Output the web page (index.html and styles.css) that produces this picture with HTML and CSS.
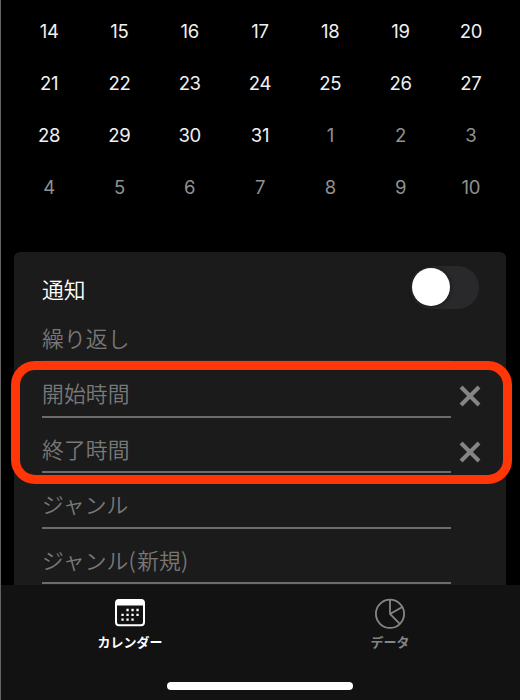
FILE: index.html
```html
<!DOCTYPE html>
<html lang="ja">
<head>
<meta charset="utf-8">
<title>カレンダー</title>
<link rel="stylesheet" href="styles.css">
</head>
<body>
<div class="screen">
  <main class="content">
    <div class="calendar">
      <span>14</span><span>15</span><span>16</span><span>17</span><span>18</span><span>19</span><span>20</span>
      <span>21</span><span>22</span><span>23</span><span>24</span><span>25</span><span>26</span><span>27</span>
      <span>28</span><span>29</span><span>30</span><span>31</span><span class="next">1</span><span class="next">2</span><span class="next">3</span>
      <span class="next">4</span><span class="next">5</span><span class="next">6</span><span class="next">7</span><span class="next">8</span><span class="next">9</span><span class="next">10</span>
    </div>
    <section class="card">
      <div class="notify">
        <span>通知</span>
        <div class="toggle"><div class="knob"></div></div>
      </div>
      <div class="row"><div class="field faint">繰り返し</div></div>
      <div class="row">
        <div class="field">開始時間</div>
        <svg class="clear" viewBox="0 0 22 22"><path d="M2 2 20 20M20 2 2 20"/></svg>
      </div>
      <div class="row">
        <div class="field">終了時間</div>
        <svg class="clear" viewBox="0 0 22 22"><path d="M2 2 20 20M20 2 2 20"/></svg>
      </div>
      <div class="row"><div class="field">ジャンル</div></div>
      <div class="row"><div class="field">ジャンル<span class="paren">(</span>新規<span class="paren">)</span></div></div>
      <div class="highlight"></div>
    </section>
  </main>
  <footer class="tabbar">
    <nav class="tabs">
      <div class="tab active">
        <svg class="icon" viewBox="0 0 32 32">
          <rect x="2" y="3" width="28" height="25.300" rx="3" fill="none" stroke="currentColor" stroke-width="2"/>
          <path d="M2 8.500V5Q2 2.500 4.500 2.500h23Q30 2.500 30 5v3.500z" fill="currentColor"/>
          <path d="M12.400 13h12.400M7.400 17.800h17.400M7.400 22.700h12.400" fill="none" stroke="currentColor" stroke-width="2.300" stroke-dasharray="2.300 2.700"/>
        </svg>
        <span>カレンダー</span>
      </div>
      <div class="tab">
        <svg class="icon" viewBox="0 0 32 32">
          <g fill="none" stroke="currentColor" stroke-width="1.800">
            <circle cx="16" cy="16.800" r="14.100"/>
            <path d="M16 2.700V17L25.800 26.900M16 17 28.300 10"/>
          </g>
        </svg>
        <span>データ</span>
      </div>
    </nav>
    <div class="home-indicator"></div>
  </footer>
</div>
</body>
</html>
```

FILE: styles.css
```css
* { box-sizing: border-box; }
body {
  margin: 0;
  background: #000;
  font-family: "Noto Sans CJK JP", sans-serif;
}
.screen {
  width: 520px;
  height: 700px;
  display: flex;
  flex-direction: column;
  overflow: hidden;
  border-left: 1px solid #646464;
}
.content {
  height: 585px;
  padding: 5px 14px 0 13px;
  overflow: hidden;
}
.calendar {
  display: grid;
  grid-template-columns: repeat(7, 1fr);
  grid-auto-rows: 52px;
  font: 18.500px/52px Inter, sans-serif;
  letter-spacing: -.3px;
  text-align: center;
  color: #f0f0f0;
}
.next { color: #919191; }
.card {
  position: relative;
  margin-top: 39px;
  height: 345px;
  padding: 14px 27px 0 28px;
  border-radius: 6px;
  background: #1b1b1b;
}
.notify {
  display: flex;
  justify-content: space-between;
  height: 41px;
  color: #fff;
  font-size: 21.800px;
  font-weight: 350;
  line-height: 45px;
}
.toggle {
  width: 69px;
  height: 43px;
  padding: 2px;
  border-radius: 22px;
  background: #29292b;
}
.knob {
  width: 38px;
  height: 38px;
  border-radius: 50%;
  background: #fff;
  box-shadow: 0 0 4px rgba(0, 0, 0, .6);
}
.row {
  display: flex;
  justify-content: space-between;
  height: 55.4px;
}
.field {
  width: 409px;
  border-bottom: 2px solid #6c6c6c;
  color: #787878;
  font-size: 21.800px;
  font-weight: 350;
  line-height: 61px;
  letter-spacing: .1px;
}
.paren { letter-spacing: 1.500px; }
.faint { border-color: #222; }
.clear {
  width: 22px;
  height: 22px;
  margin-top: 23px;
  margin-right: -2px;
  fill: none;
  stroke: #858585;
  stroke-width: 4;
}
.highlight {
  position: absolute;
  top: 109px;
  left: -3.500px;
  width: 501px;
  height: 123px;
  border: 9px solid #ff3708;
  border-radius: 24px;
}
.tabbar {
  height: 115px;
  padding-top: 12px;
  background: #121212;
}
.tabs {
  display: grid;
  grid-template-columns: 1fr 1fr;
  height: 85px;
  margin-left: -1px;
}
.tab {
  display: flex;
  flex-direction: column;
  align-items: center;
  color: #858585;
  font-size: 13px;
  font-weight: 700;
  line-height: 26px;
}
.active { color: #fff; }
.icon { width: 32px; height: 32px; }
.home-indicator {
  width: 186px;
  height: 8px;
  margin-left: 166px;
  border-radius: 4px;
  background: #fff;
}
```
